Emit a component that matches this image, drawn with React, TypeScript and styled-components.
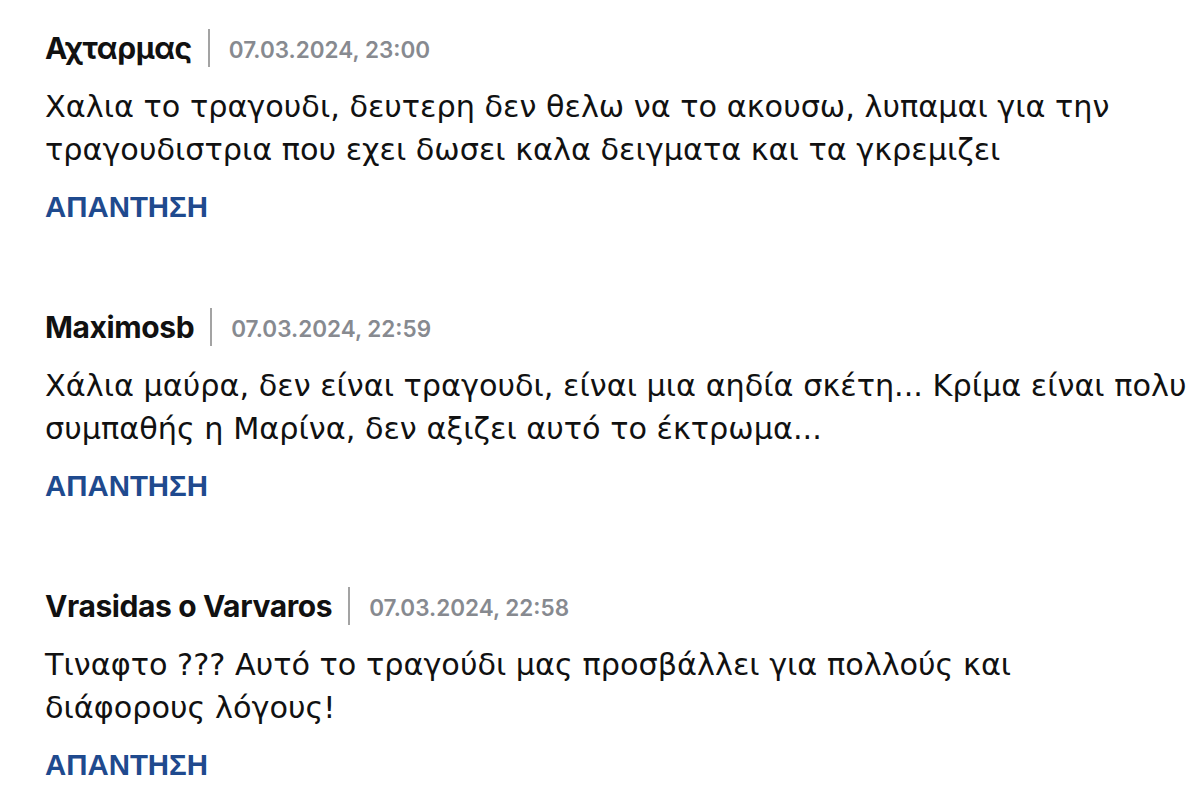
import React from "react";
import styled, { createGlobalStyle } from "styled-components";

const Global = createGlobalStyle`
  html, body { margin: 0; padding: 0; background: #ffffff; }
  body { font-family: "Liberation Sans", Arial, sans-serif; color: #111; }
`;

const List = styled.div`
  display: flex;
  flex-direction: column;
  gap: 86px;
  padding: 29px 0 0 45px;
  width: 1145px;
  overflow: hidden;
`;

const Comment = styled.article`
  display: flex;
  flex-direction: column;
`;

const Header = styled.div`
  display: flex;
  align-items: center;
  height: 38px;
`;

const Author = styled.span`
  font-family: Inter, "Noto Sans", sans-serif;
  font-weight: 700;
  font-size: 30px;
  letter-spacing: -0.4px;
  color: #111;
`;

const Divider = styled.span`
  width: 2px;
  align-self: stretch;
  background: #a3a3a3;
  margin: 0 19px 0 16px;
`;

const DateText = styled.span`
  font-family: Inter, "Noto Sans", sans-serif;
  font-weight: 600;
  font-size: 22.5px;
  color: #878a90;
  padding-top: 2px;
`;

const Body = styled.p`
  margin: 18px 0 0 0;
  font-family: "DejaVu Sans", "Liberation Sans", sans-serif;
  font-size: 30.3px;
  line-height: 43px;
  color: #111;
`;

const Line = styled.span`
  display: block;
  white-space: nowrap;
`;

const Reply = styled.a`
  margin-top: 21px;
  font-family: "Liberation Sans", Arial, sans-serif;
  font-weight: 700;
  font-size: 29.4px;
  line-height: 30px;
  color: #1f4a8e;
  text-decoration: none;
  align-self: flex-start;
  cursor: pointer;
`;

const comments = [
  {
    author: "Αχταρμας",
    date: "07.03.2024, 23:00",
    lines: [
      "Χαλια το τραγουδι, δευτερη δεν θελω να το ακουσω, λυπαμαι για την",
      "τραγουδιστρια που εχει δωσει καλα δειγματα και τα γκρεμιζει",
    ],
  },
  {
    author: "Maximosb",
    date: "07.03.2024, 22:59",
    lines: [
      "Χάλια μαύρα, δεν είναι τραγουδι, είναι μια αηδία σκέτη... Κρίμα είναι πολυ",
      "συμπαθής η Μαρίνα, δεν αξιζει αυτό το έκτρωμα...",
    ],
  },
  {
    author: "Vrasidas o Varvaros",
    date: "07.03.2024, 22:58",
    lines: [
      "Τιναφτο ??? Αυτό το τραγούδι μας προσβάλλει για πολλούς και",
      "διάφορους λόγους!",
    ],
  },
];

export default function App() {
  return (
    <>
      <Global />
      <List>
        {comments.map((c) => (
          <Comment key={c.author}>
            <Header>
              <Author>{c.author}</Author>
              <Divider />
              <DateText>{c.date}</DateText>
            </Header>
            <Body>
              {c.lines.map((l) => (
                <Line key={l}>{l}</Line>
              ))}
            </Body>
            <Reply>ΑΠΑΝΤΗΣΗ</Reply>
          </Comment>
        ))}
      </List>
    </>
  );
}
